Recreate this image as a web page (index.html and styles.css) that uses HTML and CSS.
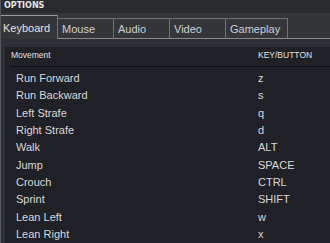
FILE: index.html
```html
<!DOCTYPE html>
<html lang="en">
<head>
    <meta charset="UTF-8">
    <title>Options</title>
    <link rel="stylesheet" href="styles.css">
</head>
<body>
    <div class="window">
        <div class="titlebar">OPTIONS</div>
        <div class="tabs">
            <div class="tab active">Keyboard</div>
            <div class="tab">Mouse</div>
            <div class="tab">Audio</div>
            <div class="tab">Video</div>
            <div class="tab wide">Gameplay</div>
            <div class="tab-fill"></div>
        </div>
        <div class="content">
            <div class="panel">
                <div class="header">
                    <span class="col-name">Movement</span>
                    <span class="col-key">KEY/BUTTON</span>
                </div>
                <div class="rows">
                    <div class="row"><span class="col-name">Run Forward</span><span class="col-key">z</span></div>
                    <div class="row"><span class="col-name">Run Backward</span><span class="col-key">s</span></div>
                    <div class="row"><span class="col-name">Left Strafe</span><span class="col-key">q</span></div>
                    <div class="row"><span class="col-name">Right Strafe</span><span class="col-key">d</span></div>
                    <div class="row"><span class="col-name">Walk</span><span class="col-key">ALT</span></div>
                    <div class="row"><span class="col-name">Jump</span><span class="col-key">SPACE</span></div>
                    <div class="row"><span class="col-name">Crouch</span><span class="col-key">CTRL</span></div>
                    <div class="row"><span class="col-name">Sprint</span><span class="col-key">SHIFT</span></div>
                    <div class="row"><span class="col-name">Lean Left</span><span class="col-key">w</span></div>
                    <div class="row"><span class="col-name">Lean Right</span><span class="col-key">x</span></div>
                </div>
            </div>
        </div>
    </div>
</body>
</html>
```
FILE: styles.css
```css
body {
    margin: 0;
    background: #2e2f34;
    font-family: 'Liberation Sans', Arial, sans-serif;
    color: #d8d8d8;
    overflow: hidden;
}
.window {
    width: 330px;
    height: 243px;
    display: flex;
    flex-direction: column;
    border-left: 1px solid #55565a;
    box-sizing: border-box;
}
.titlebar {
    height: 13px;
    padding-left: 3px;
    font-family: 'DejaVu Sans', sans-serif;
    font-size: 8px;
    font-weight: bold;
    line-height: 12px;
    color: #e6e6e6;
    background: #2a2b2f;
}
.tabs {
    display: flex;
    align-items: flex-end;
    height: 26px;
    background: #35363a;
}
.tab {
    width: 56px;
    height: 21px;
    box-sizing: border-box;
    padding-left: 4px;
    font-size: 11px;
    line-height: 20px;
    color: #d0d0d0;
    border: 1px solid #707075;
    border-left: none;
    border-bottom-color: #8a8a8e;
}
.tab.wide {
    width: 62px;
}
.tab.active {
    width: 57px;
    height: 24px;
    padding-left: 2px;
    line-height: 24px;
    border-top: 1px solid #9a9a9e;
    border-bottom: none;
    border-right: 1px solid #707075;
    color: #e0e0e0;
}
.tab-fill {
    flex: 1;
    border-bottom: 1px solid #8a8a8e;
}
.content {
    flex: 1;
    padding: 8px 0 0 4px;
}
.panel {
    height: 100%;
    background: #202126;
}
.header {
    display: flex;
    height: 19px;
    margin-left: 5px;
    padding-left: 1px;
    border-bottom: 1px solid #0e0f12;
    font-size: 8.5px;
    line-height: 17px;
    color: #e0e0e0;
}
.header .col-name {
    width: 247px;
}
.rows {
    padding-top: 2px;
}
.row {
    display: flex;
    height: 17.33px;
    padding-left: 11px;
    font-size: 11px;
    line-height: 18px;
}
.row .col-name {
    width: 242px;
}
```
